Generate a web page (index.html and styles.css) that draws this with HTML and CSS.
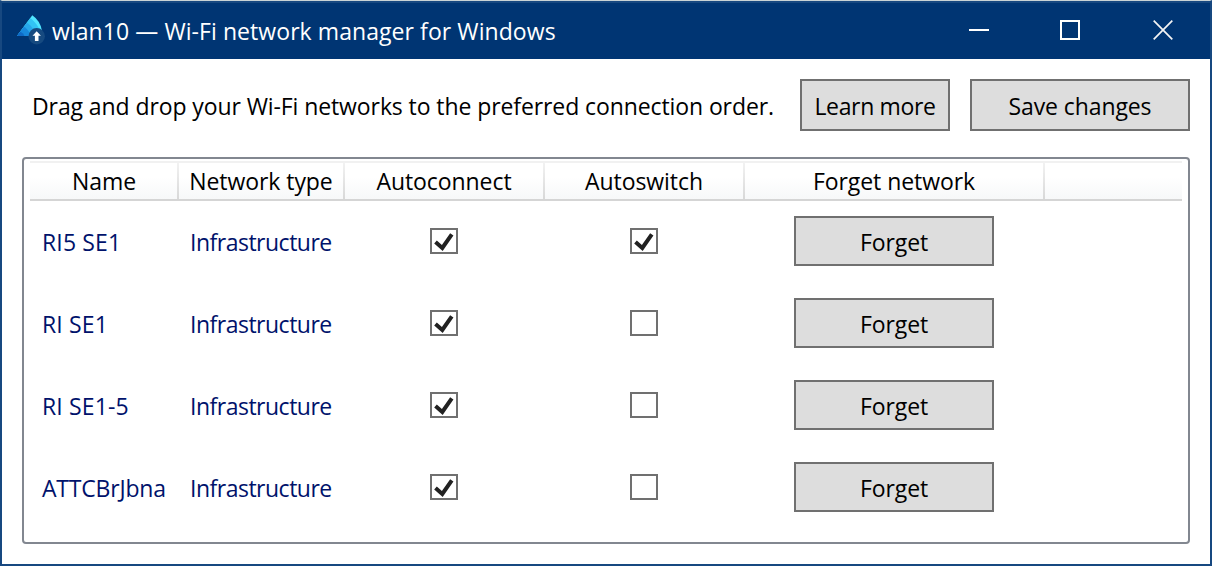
FILE: index.html
```
<!DOCTYPE html>
<html lang="en">
<head>
<meta charset="utf-8">
<title>wlan10</title>
<link rel="stylesheet" href="styles.css">
</head>
<body>
<div class="window">
  <header class="titlebar">
    <svg class="logo" width="32" height="34" viewBox="0 0 32 34">
      <defs><clipPath id="fan"><path d="M15.3 0.3 Q23.5 6 25 16 L25 21 L0 21 Z"/></clipPath></defs>
      <g clip-path="url(#fan)">
        <rect width="32" height="34" fill="#50e6ff"/>
        <circle cx="0" cy="24" r="24.5" fill="#32c4f4"/>
        <circle cx="0" cy="24" r="19" fill="#28a8ea"/>
        <circle cx="0" cy="24" r="14" fill="#1788dc"/>
        <circle cx="0" cy="24" r="8" fill="#0f6ac6"/>
      </g>
      <circle cx="19.7" cy="21.2" r="8.2" fill="#164a80"/>
      <path d="M19.7 16.2l4.2 4.6h-2.4v5.2h-3.6v-5.2h-2.4z" fill="#fff"/>
    </svg>
    <h1 class="title">wlan10 — Wi-Fi network manager for Windows</h1>
    <div class="controls">
      <svg width="20" height="20" viewBox="0 0 20 20"><path d="M0 10h20" stroke="#fff" stroke-width="2"/></svg>
      <svg width="20" height="20" viewBox="0 0 20 20"><path d="M1 1h18v18H1z" fill="none" stroke="#fff" stroke-width="2"/></svg>
      <svg width="20" height="20" viewBox="0 0 20 20"><path d="M.7.7l18.6 18.6M19.3.7L.7 19.3" stroke="#f4f4f4" stroke-width="1.7"/></svg>
    </div>
  </header>
  <main class="content">
    <div class="toolbar">
      <p class="hint">Drag and drop your Wi-Fi networks to the preferred connection order.</p>
      <button class="btn learn">Learn more</button>
      <button class="btn save">Save changes</button>
    </div>
    <div class="list">
      <div class="head cols">
        <span class="name">Name</span><span class="type">Network type</span><span>Autoconnect</span><span>Autoswitch</span><span>Forget network</span>
      </div>
      <div class="row cols">
        <span class="cell short">RI5 SE1</span><span class="cell infra">Infrastructure</span>
        <span class="box"><svg viewBox="0 0 24 22"><path d="M3.5 12.1L10.3 18L19.8 4.3" /></svg></span>
        <span class="box"><svg viewBox="0 0 24 22"><path d="M3.5 12.1L10.3 18L19.8 4.3" /></svg></span>
        <button class="btn forget">Forget</button>
      </div>
      <div class="row cols">
        <span class="cell short">RI SE1</span><span class="cell infra">Infrastructure</span>
        <span class="box"><svg viewBox="0 0 24 22"><path d="M3.5 12.1L10.3 18L19.8 4.3" /></svg></span>
        <span class="box"></span>
        <button class="btn forget">Forget</button>
      </div>
      <div class="row cols">
        <span class="cell short">RI SE1-5</span><span class="cell infra">Infrastructure</span>
        <span class="box"><svg viewBox="0 0 24 22"><path d="M3.5 12.1L10.3 18L19.8 4.3" /></svg></span>
        <span class="box"></span>
        <button class="btn forget">Forget</button>
      </div>
      <div class="row cols">
        <span class="cell">ATTCBrJbna</span><span class="cell infra">Infrastructure</span>
        <span class="box"><svg viewBox="0 0 24 22"><path d="M3.5 12.1L10.3 18L19.8 4.3" /></svg></span>
        <span class="box"></span>
        <button class="btn forget">Forget</button>
      </div>
    </div>
  </main>
</div>
</body>
</html>
```
FILE: styles.css
```
* { box-sizing: border-box; }
body {
  margin: 0;
  font-family: "Open Sans", "Noto Sans", sans-serif;
  font-size: 23px;
  line-height: 32px;
  letter-spacing: -0.07px;
  color: #000;
}
.window {
  width: 1212px;
  height: 566px;
  display: flex;
  flex-direction: column;
  border: 2px solid #174880;
  border-top: 1px solid #c9d3d5;
  background: #fff;
}
.titlebar {
  height: 58px;
  display: flex;
  align-items: flex-start;
  padding: 12px 37px 0 15px;
  border-top: 2px solid #174880;
  background: #003573;
  color: #fff;
}
.logo { flex: none; }
.title {
  margin: 0 0 0 3px;
  font-size: 23px;
  font-weight: 400;
  letter-spacing: 0.07px;
  white-space: nowrap;
}
.controls {
  display: flex;
  margin: 5px 0 0 auto;
}
.controls svg + svg { margin-left: 71px; }
.controls svg:last-child { margin-left: 73px; }
.content {
  flex: 1;
  display: flex;
  flex-direction: column;
  padding: 20px 20px;
}
.toolbar {
  display: flex;
  align-items: center;
  height: 52px;
}
.hint {
  flex: 1;
  margin: 0;
  padding: 2px 0 0 10px;
  letter-spacing: -0.095px;
  white-space: nowrap;
}
.btn {
  padding: 2px 0 0;
  border: 2px solid #707070;
  background: #ddd;
  color: #000;
  font: inherit;
  letter-spacing: -0.1px;
}
.learn { width: 150px; height: 52px; margin-right: 20px; letter-spacing: -0.35px; }
.save { width: 220px; height: 52px; }
.list {
  flex: 1;
  margin-top: 26px;
  padding: 2px 6px;
  border: 2px solid #828790;
  border-radius: 4px;
}
.cols {
  display: grid;
  grid-template-columns: 148px 166px 200px 200px 300px;
}
.head {
  height: 40px;
  border-top: 2px solid #f1f1f1;
  border-bottom: 2px solid #d5d5d5;
  background: linear-gradient(#fff 40%, #f7f8f9);
}
.head span {
  position: relative;
  padding-top: 2px;
  text-align: center;
}
.head span::after {
  content: "";
  position: absolute;
  top: 0;
  right: -1px;
  width: 2px;
  height: 36px;
  background: linear-gradient(#f2f2f2, #d8d8d8);
}
.row {
  height: 82px;
  align-items: center;
  justify-items: center;
  color: #00126b;
}
.head + .row { margin-top: -1px; }
.cell {
  justify-self: start;
  padding: 2px 0 0 12px;
  letter-spacing: -0.2px;
}
.short { letter-spacing: 0.15px; }
.infra { letter-spacing: -0.5px; }
.box {
  width: 28px;
  height: 26px;
  border: 2px solid #707070;
  background: #fff;
}
.box svg { display: block; width: 24px; height: 22px; }
.box path { fill: none; stroke: #212121; stroke-width: 4; }
.forget { width: 200px; height: 50px; }
```
